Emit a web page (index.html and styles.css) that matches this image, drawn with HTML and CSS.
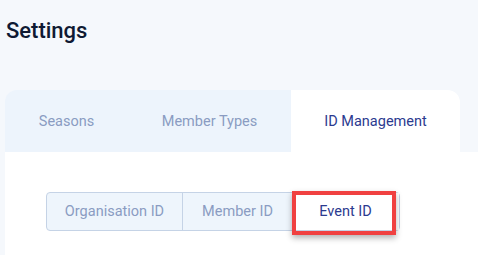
FILE: index.html
```html
<!DOCTYPE html>
<html lang="en">
<head>
<meta charset="utf-8">
<title>Settings</title>
<link rel="stylesheet" href="styles.css">
</head>
<body>
<main class="page">
  <h1 class="title">Settings</h1>
  <section class="card">
    <nav class="tabs">
      <a class="tab tab-seasons">Seasons</a>
      <a class="tab tab-types">Member Types</a>
      <a class="tab tab-id is-active">ID Management</a>
    </nav>
    <div class="panel">
      <div class="segmented">
        <button class="seg seg-org">Organisation ID</button>
        <button class="seg seg-member">Member ID</button>
        <button class="seg seg-event is-active">Event ID<span class="highlight"></span></button>
      </div>
    </div>
  </section>
</main>
</body>
</html>
```
FILE: styles.css
```css
* { box-sizing: border-box; }
html, body {
  margin: 0;
  height: 100%;
  overflow: hidden;
  background: #f5f8fc;
  font-family: Roboto, "Liberation Sans", sans-serif;
}
.page {
  display: flex;
  flex-direction: column;
  height: 100%;
}
.title {
  margin: 18px 0 0 6px;
  font-size: 22px;
  line-height: 26px;
  font-weight: 500;
  color: #0f1a33;
}
.card {
  margin: 46px 0 0 5px;
  flex: 1;
  display: flex;
  flex-direction: column;
}
.tabs {
  display: flex;
  width: 455px;
  height: 62px;
  background: #edf4fc;
  border-radius: 12px 12px 0 0;
  overflow: hidden;
}
.tab {
  display: flex;
  align-items: center;
  justify-content: center;
  font-size: 14.5px;
  color: #8a9cc2;
  padding-top: 1px;
}
.tab-seasons { width: 123px; }
.tab-types { width: 163px; }
.tab-id { width: 169px; }
.tab.is-active {
  background: #ffffff;
  color: #2b3a8f;
}
.panel {
  flex: 1;
  background: #ffffff;
  padding: 40px 0 0 41px;
}
.segmented {
  display: flex;
  width: 354px;
  height: 39px;
  border: 1px solid #c5d3e6;
  border-radius: 4px;
  background: #eef5fc;
}
.seg {
  position: relative;
  border: 0;
  background: transparent;
  font-family: inherit;
  font-size: 14.5px;
  color: #8a9cc2;
  padding: 0;
}
.seg-org { width: 136px; border-right: 1px solid #c5d3e6; }
.seg-member { width: 109px; }
.seg-event { width: 107px; }
.seg.is-active {
  background: #ffffff;
  color: #2b3a8f;
}
.highlight {
  position: absolute;
  left: 0;
  top: -2px;
  width: 104px;
  height: 44px;
  border: 4px solid #f04141;
  box-shadow: 0 3px 6px rgba(0, 0, 0, 0.3);
}
```
